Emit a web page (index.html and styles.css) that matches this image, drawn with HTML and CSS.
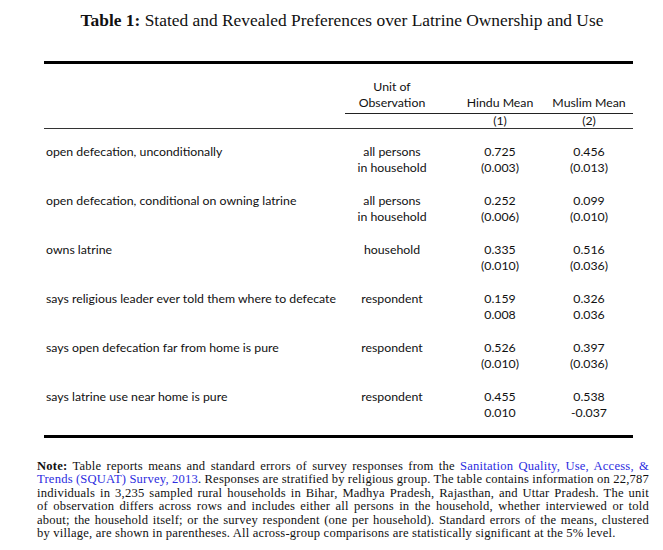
FILE: index.html
```html
<!DOCTYPE html>
<html>
<head>
<meta charset="utf-8">
<link rel="stylesheet" href="styles.css">
</head>
<body>
<h1 class="title"><b>Table 1:</b> Stated and Revealed Preferences over Latrine Ownership and Use</h1>
<div class="table">
  <div class="rule-thick"></div>
  <div class="grid head">
    <div></div>
    <div class="c">Unit of<br>Observation</div>
    <div class="c c3 bottom">Hindu Mean</div>
    <div class="c bottom">Muslim Mean</div>
  </div>
  <div class="cmid"></div>
  <div class="grid nums">
    <div></div>
    <div></div>
    <div class="c c3">(1)</div>
    <div class="c">(2)</div>
  </div>
  <div class="rule-thin"></div>
  <div class="rows">
    <div class="grid row">
      <div>open defecation, unconditionally</div>
      <div class="c">all persons<br>in household</div>
      <div class="c c3">0.725<br>(0.003)</div>
      <div class="c">0.456<br>(0.013)</div>
    </div>
    <div class="grid row">
      <div>open defecation, conditional on owning latrine</div>
      <div class="c">all persons<br>in household</div>
      <div class="c c3">0.252<br>(0.006)</div>
      <div class="c">0.099<br>(0.010)</div>
    </div>
    <div class="grid row">
      <div>owns latrine</div>
      <div class="c">household</div>
      <div class="c c3">0.335<br>(0.010)</div>
      <div class="c">0.516<br>(0.036)</div>
    </div>
    <div class="grid row">
      <div>says religious leader ever told them where to defecate</div>
      <div class="c">respondent</div>
      <div class="c c3">0.159<br>0.008</div>
      <div class="c">0.326<br>0.036</div>
    </div>
    <div class="grid row">
      <div>says open defecation far from home is pure</div>
      <div class="c">respondent</div>
      <div class="c c3">0.526<br>(0.010)</div>
      <div class="c">0.397<br>(0.036)</div>
    </div>
    <div class="grid row">
      <div>says latrine use near home is pure</div>
      <div class="c">respondent</div>
      <div class="c c3">0.455<br>0.010</div>
      <div class="c">0.538<br>-0.037</div>
    </div>
  </div>
  <div class="rule-thick"></div>
</div>
<p class="note">
  <span class="ln"><b>Note:</b> Table reports means and standard errors of survey responses from the <span class="link">Sanitation Quality, Use, Access, &amp;</span></span>
  <span class="ln"><span class="link">Trends (SQUAT) Survey, 2013</span>. Responses are stratified by religious group. The table contains information on 22,787</span>
  <span class="ln">individuals in 3,235 sampled rural households in Bihar, Madhya Pradesh, Rajasthan, and Uttar Pradesh. The unit</span>
  <span class="ln">of observation differs across rows and includes either all persons in the household, whether interviewed or told</span>
  <span class="ln">about; the household itself; or the survey respondent (one per household). Standard errors of the means, clustered</span>
  <span class="ln last">by village, are shown in parentheses. All across-group comparisons are statistically significant at the 5% level.</span>
</p>
</body>
</html>
```
FILE: styles.css
```css
html, body {
  margin: 0;
  padding: 0;
  background: #ffffff;
  color: #111111;
}
body {
  width: 663px;
  height: 550px;
  overflow: hidden;
}
.title {
  margin: 0;
  padding: 10px 0 0 21px;
  font-family: "Liberation Serif", serif;
  font-weight: normal;
  font-size: 17.4px;
  line-height: 20px;
  text-align: center;
  color: #111;
}
.title b {
  font-weight: bold;
}
.table {
  margin: 31px 0 0 44px;
  width: 589px;
  font-family: Lato, "Liberation Sans", sans-serif;
  font-size: 12.3px;
  line-height: 16px;
  color: #111;
}
.rule-thick {
  height: 3px;
  background: #000;
}
.rule-thin {
  height: 1px;
  background: #333;
}
.grid {
  display: grid;
  grid-template-columns: 301px 94px 106px 88px;
}
.c {
  text-align: center;
  white-space: nowrap;
}
.c3 {
  padding-left: 16px;
}
.bottom {
  align-self: end;
}
.head {
  padding-top: 15px;
  padding-bottom: 2px;
}
.cmid {
  margin-left: 301px;
  height: 1px;
  background: #222;
}
.nums {
  line-height: 14px;
}
.rows {
  padding-top: 15px;
  padding-bottom: 14px;
  display: flex;
  flex-direction: column;
  gap: 17px;
}
.row > div:first-child {
  padding-left: 2px;
  white-space: nowrap;
}
.note {
  margin: 22px 0 0 37px;
  width: 612px;
  font-family: "Liberation Serif", serif;
  font-size: 12.6px;
  letter-spacing: 0.2px;
  line-height: 13.4px;
  color: #111;
}
.ln {
  display: block;
  text-align: justify;
  text-align-last: justify;
  white-space: nowrap;
  word-spacing: -1.5px;
}
.ln.last {
  text-align-last: left;
  word-spacing: 0;
}
.link {
  color: #2c2ce0;
}
```
